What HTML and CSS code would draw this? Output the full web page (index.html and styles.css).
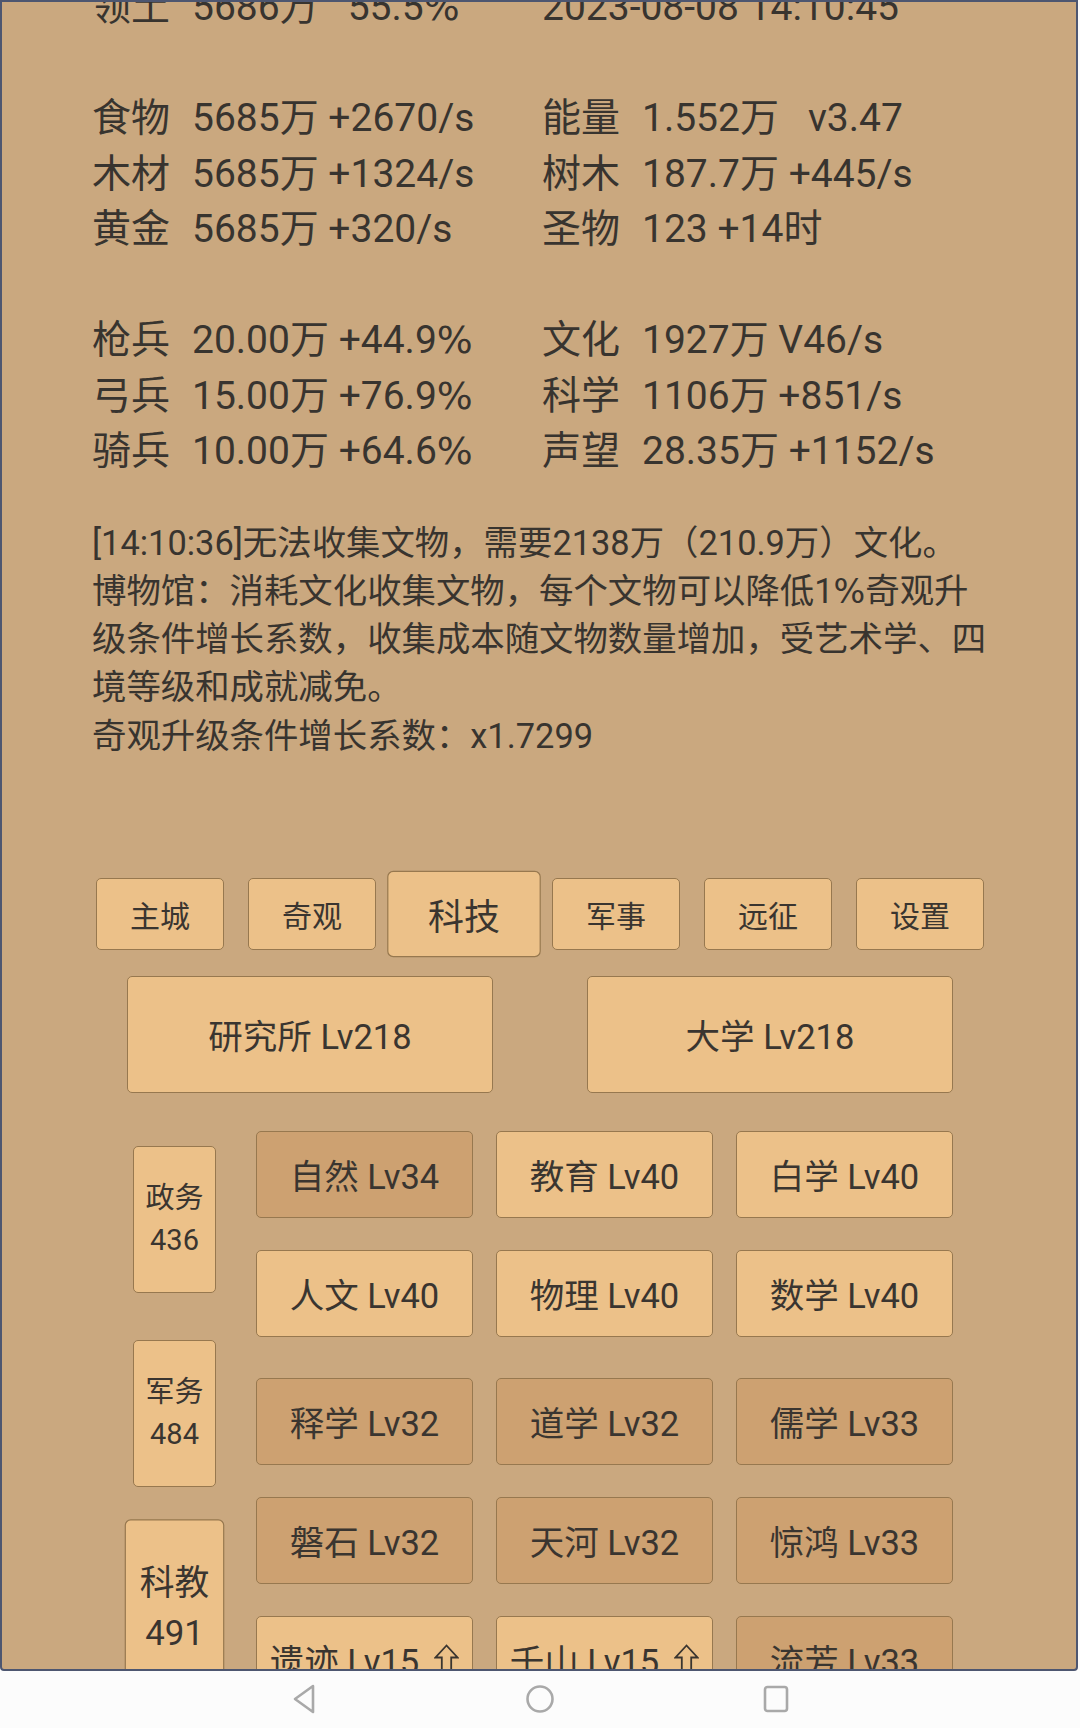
FILE: index.html
```html
<!DOCTYPE html>
<html lang="zh">
<head>
<meta charset="utf-8">
<title>科技</title>
<link rel="stylesheet" href="styles.css">
</head>
<body>
<div class="screen">
  <div class="panel">
    <div class="content">
      <div class="stats">
        <div class="cell"><span class="lbl">领土</span>5686万&nbsp;&nbsp; 55.5<span class="pct">%</span></div>
        <div class="cell">2023-08-08 14:10:45</div>
        <div class="cell"></div><div class="cell"></div>
        <div class="cell"><span class="lbl">食物</span>5685万 +2670/s</div>
        <div class="cell"><span class="lbl">能量</span>1.552万&nbsp; &nbsp;v3.47</div>
        <div class="cell"><span class="lbl">木材</span>5685万 +1324/s</div>
        <div class="cell"><span class="lbl">树木</span>187.7万 +445/s</div>
        <div class="cell"><span class="lbl">黄金</span>5685万 +320/s</div>
        <div class="cell"><span class="lbl">圣物</span>123 +14时</div>
        <div class="cell"></div><div class="cell"></div>
        <div class="cell"><span class="lbl">枪兵</span>20.00万 +44.9<span class="pct">%</span></div>
        <div class="cell"><span class="lbl">文化</span>1927万 V46/s</div>
        <div class="cell"><span class="lbl">弓兵</span>15.00万 +76.9<span class="pct">%</span></div>
        <div class="cell"><span class="lbl">科学</span>1106万 +851/s</div>
        <div class="cell"><span class="lbl">骑兵</span>10.00万 +64.6<span class="pct">%</span></div>
        <div class="cell"><span class="lbl">声望</span>28.35万 +1152/s</div>
      </div>
      <div class="msg">
        <p>[14:10:36]无法收集文物，需要2138万（210.9万）文化。</p>
        <p>博物馆：消耗文化收集文物，每个文物可以降低1<span class="pct">%</span>奇观升级条件增长系数，收集成本随文物数量增加，受艺术学、四境等级和成就减免。</p>
        <p>奇观升级条件增长系数：x1.7299</p>
      </div>

      <div class="tabs">
        <div class="btn tab">主城</div>
        <div class="btn tab">奇观</div>
        <div class="btn tab active">科技</div>
        <div class="btn tab">军事</div>
        <div class="btn tab">远征</div>
        <div class="btn tab">设置</div>
      </div>

      <div class="big-row">
        <div class="btn big">研究所 Lv218</div>
        <div class="btn big">大学 Lv218</div>
      </div>

      <div class="tech">
        <div class="side">
          <div class="btn sidebtn"><span>政务</span><span>436</span></div>
          <div class="btn sidebtn"><span>军务</span><span>484</span></div>
          <div class="btn sidebtn active"><span>科教</span><span>491</span></div>
        </div>
        <div class="groups">
          <div class="group">
            <div class="btn item dark">自然 Lv34</div>
            <div class="btn item">教育 Lv40</div>
            <div class="btn item">白学 Lv40</div>
            <div class="btn item">人文 Lv40</div>
            <div class="btn item">物理 Lv40</div>
            <div class="btn item">数学 Lv40</div>
          </div>
          <div class="group">
            <div class="btn item dark">释学 Lv32</div>
            <div class="btn item dark">道学 Lv32</div>
            <div class="btn item dark">儒学 Lv33</div>
            <div class="btn item dark">磐石 Lv32</div>
            <div class="btn item dark">天河 Lv32</div>
            <div class="btn item dark">惊鸿 Lv33</div>
            <div class="btn item">遗迹 Lv15<svg class="up" width="25" height="33" viewBox="0 0 25 33"><path d="M12.5 1.5 L1.5 13.5 L7.8 13.5 L7.8 32 L17.2 32 L17.2 13.5 L23.5 13.5 Z" fill="none" stroke="#3a3530" stroke-width="1.8" stroke-linejoin="miter"/></svg></div>
            <div class="btn item">千山 Lv15<svg class="up" width="25" height="33" viewBox="0 0 25 33"><path d="M12.5 1.5 L1.5 13.5 L7.8 13.5 L7.8 32 L17.2 32 L17.2 13.5 L23.5 13.5 Z" fill="none" stroke="#3a3530" stroke-width="1.8" stroke-linejoin="miter"/></svg></div>
            <div class="btn item dark">流芳 Lv33</div>
          </div>
        </div>
      </div>
    </div>
  </div>
  <div class="navbar">
    <svg class="nav-ico" width="30" height="32" viewBox="0 0 30 32"><path d="M24 3 L6 16 L24 29 Z" fill="none" stroke="#a9a9a9" stroke-width="2.6" stroke-linejoin="round"/></svg>
    <svg class="nav-ico" width="30" height="32" viewBox="0 0 30 32"><circle cx="15" cy="16" r="12.5" fill="none" stroke="#a9a9a9" stroke-width="2.6"/></svg>
    <svg class="nav-ico" width="30" height="32" viewBox="0 0 30 32"><rect x="4" y="4" width="22" height="24" rx="2.5" fill="none" stroke="#a9a9a9" stroke-width="2.6"/></svg>
  </div>
</div>
</body>
</html>
```

FILE: styles.css
```css
* { box-sizing: border-box; }
html, body { margin: 0; padding: 0; }
body {
  width: 1080px;
  height: 1728px;
  overflow: hidden;
  background: #fcfcfc;
  font-family: Roboto, "Noto Sans CJK SC", sans-serif;
  color: #38342f;
}
.screen {
  width: 1080px;
  height: 1728px;
  display: flex;
  flex-direction: column;
}
.panel {
  width: 1078px;
  height: 1671px;
  background: #caa87f;
  border: 2px solid #4d5670;
  border-radius: 0 0 4px 4px;
  overflow: hidden;
}
.content {
  margin-top: -22px;
  padding-left: 90px;
}
.stats {
  display: grid;
  grid-template-columns: 450px 450px;
  grid-auto-rows: 55.5px;
  font-size: 39px;
  line-height: 55.5px;
  white-space: nowrap;
}
.lbl {
  display: inline-block;
  width: 100px;
}
.pct {
  font-family: "DejaVu Sans", sans-serif;
  font-size: 0.97em;
  line-height: 1;
}
.msg {
  margin-top: 39px;
  width: 900px;
  font-size: 34.4px;
  line-height: 48.3px;
}
.msg p { margin: 0; }

.btn {
  background: #ecc189;
  border: 1.5px solid #97784f;
  border-radius: 5px;
  display: flex;
  align-items: center;
  justify-content: center;
  white-space: nowrap;
  color: #3a3530;
}
.btn.dark { background: #cda171; }

.tabs {
  margin-top: 118px;
  margin-left: -92px;
  width: 1080px;
  display: flex;
  justify-content: center;
  gap: 24px;
}
.tab {
  width: 128px;
  height: 72px;
  font-size: 30px;
}
.tab.active, .sidebtn.active { transform: scale(1.2); }

.big-row {
  margin-top: 26px;
  margin-left: -12px;
  display: grid;
  grid-template-columns: 460px 460px;
  justify-items: center;
}
.big {
  width: 366px;
  height: 117px;
  font-size: 34.5px;
}

.tech {
  margin-top: 38px;
  margin-left: 41px;
  display: flex;
  gap: 40px;
}
.side {
  padding-top: 15px;
  display: flex;
  flex-direction: column;
  gap: 47px;
}
.sidebtn {
  width: 83px;
  height: 147px;
  flex-direction: column;
  font-size: 29px;
  line-height: 42px;
}
.groups {
  display: flex;
  flex-direction: column;
  gap: 41px;
}
.group {
  display: grid;
  grid-template-columns: repeat(3, 217px);
  grid-auto-rows: 87px;
  column-gap: 23px;
  row-gap: 32px;
}
.item {
  font-size: 34.5px;
}
.up {
  display: block;
  margin-left: 15px;
  margin-top: 2px;
}
.navbar {
  flex: 1;
  display: flex;
  align-items: center;
  justify-content: center;
  gap: 206px;
  padding-bottom: 1px;
}
.nav-ico { display: block; }
```
